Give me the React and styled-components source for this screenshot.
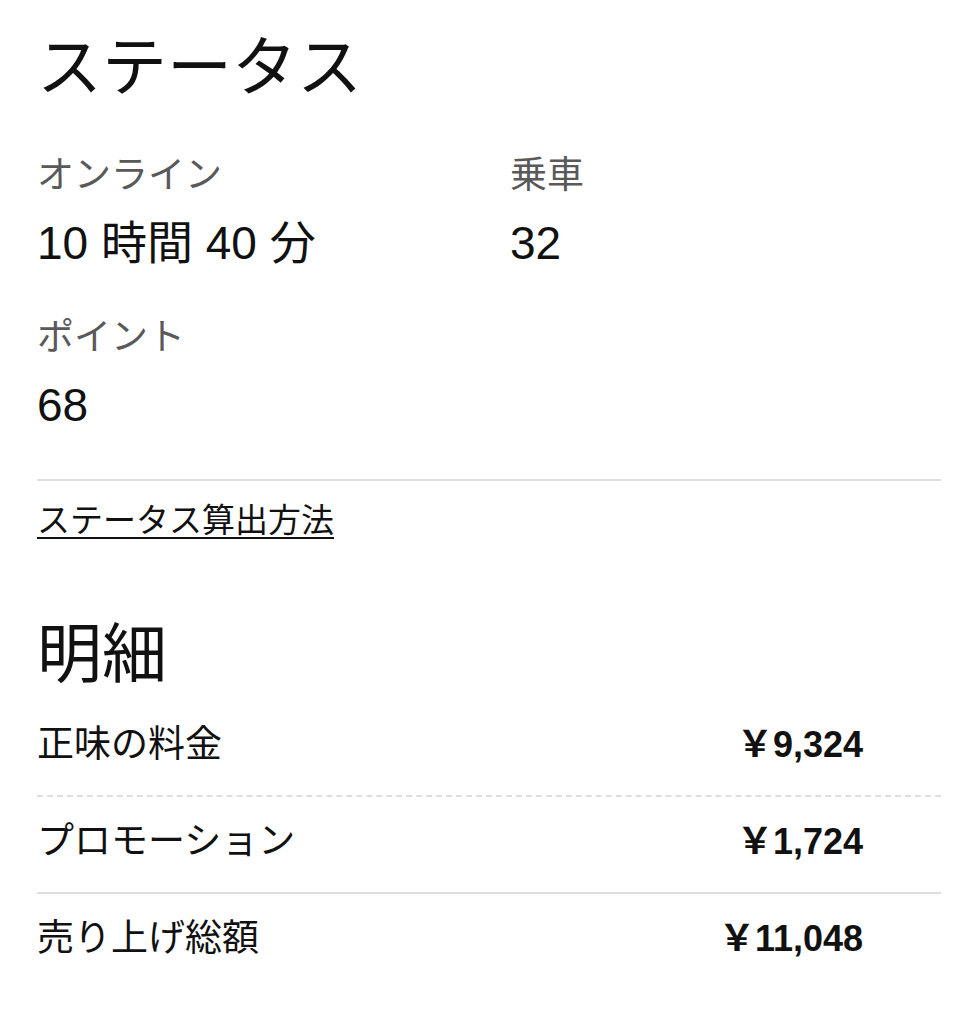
import React from 'react'
import styled, { createGlobalStyle } from 'styled-components'

const GlobalStyle = createGlobalStyle`
  body {
    margin: 0;
    background: #fff;
    font-family: "Liberation Sans", "Noto Sans CJK JP", sans-serif;
    color: #111;
  }
`

const Page = styled.main`
  padding: 28px 38px 40px 37px;
`

const Heading = styled.h1`
  margin: 0;
  font-size: 65px;
  font-weight: 400;
  line-height: 80px;
  color: #111;
`

const StatGrid = styled.div`
  display: grid;
  grid-template-columns: 473px 1fr;
  row-gap: 49px;
  margin-top: 48px;
`

const Stat = styled.div`
  display: flex;
  flex-direction: column;
`

const StatLabel = styled.span`
  font-size: 37px;
  line-height: 40px;
  color: #595959;
`

const StatValue = styled.span`
  margin-top: 21px;
  font-size: 46px;
  line-height: 52px;
  color: #111;
`

const Divider = styled.hr`
  margin: 48px 0 0;
  border: 0;
  border-top: 2px solid #dedede;
`

const HelpLink = styled.a`
  display: inline-block;
  margin-top: 20px;
  font-size: 33px;
  line-height: 40px;
  color: #111;
  text-decoration: underline;
  text-underline-offset: 5px;
  text-decoration-thickness: 2px;
`

const Section = styled.section`
  margin-top: 74px;
`

const RowList = styled.div`
  margin-top: 3px;
`

const Row = styled.div`
  display: flex;
  justify-content: space-between;
  align-items: center;
  height: 95px;
  padding: 0 78px 6px 0;
  box-sizing: border-box;
  height: 97px;
  border-top: 2px ${p => p.$line || 'solid'} ${p => (p.$line ? '#dedede' : 'transparent')};
`

const RowLabel = styled.span`
  font-size: 37px;
  line-height: 50px;
  color: #111;
`

const RowValue = styled.span`
  font-size: 36px;
  line-height: 50px;
  font-weight: 700;
  color: #111;
`

const rows = [
  { label: '正味の料金', value: '￥9,324' },
  { label: 'プロモーション', value: '￥1,724', line: 'dashed' },
  { label: '売り上げ総額', value: '￥11,048', line: 'solid' },
]

export default function App() {
  return (
    <>
      <GlobalStyle />
      <Page>
        <Heading>ステータス</Heading>
        <StatGrid>
          <Stat>
            <StatLabel>オンライン</StatLabel>
            <StatValue>10 時間 40 分</StatValue>
          </Stat>
          <Stat>
            <StatLabel>乗車</StatLabel>
            <StatValue>32</StatValue>
          </Stat>
          <Stat>
            <StatLabel>ポイント</StatLabel>
            <StatValue>68</StatValue>
          </Stat>
        </StatGrid>
        <Divider />
        <HelpLink href="#">ステータス算出方法</HelpLink>
        <Section>
          <Heading>明細</Heading>
          <RowList>
            {rows.map(r => (
              <Row key={r.label} $line={r.line}>
                <RowLabel>{r.label}</RowLabel>
                <RowValue>{r.value}</RowValue>
              </Row>
            ))}
          </RowList>
        </Section>
      </Page>
    </>
  )
}
